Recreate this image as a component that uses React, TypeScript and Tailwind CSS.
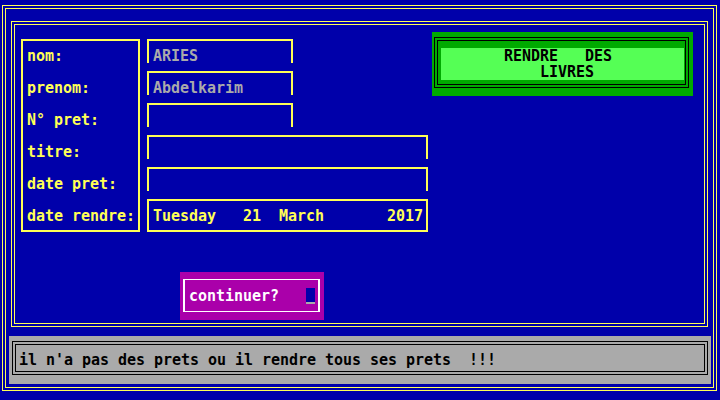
const font = { fontFamily: "'DejaVu Sans Mono', 'Liberation Mono', monospace" };

const labels = ["nom:", "prenom:", "N° pret:", "titre:", "date pret:", "date rendre:"];

const fields = [
  { text: "ARIES", long: false, color: "text-[#aaaaaa]" },
  { text: "Abdelkarim", long: false, color: "text-[#aaaaaa]" },
  { text: "", long: false, color: "text-[#aaaaaa]" },
  { text: "", long: true, color: "text-[#ffff55]" },
  { text: "", long: true, color: "text-[#ffff55]" },
];

export default function App() {
  return (
    <div
      className="w-[720px] h-[400px] bg-[#0000aa] pl-[2px] pt-[5px] overflow-hidden text-[15px] leading-[16px] font-bold tracking-[-0.03px] whitespace-pre"
      style={font}
    >
      {/* outer frame */}
      <div className="w-[715px] h-[386px] border-4 border-double border-[#ffff55]">
        {/* inner frame */}
        <div className="ml-[5px] mt-[12px] w-[697px] h-[306px] border-4 border-double border-[#ffff55]">
          <div className="flex items-start pt-[7px]">
            {/* labels */}
            <div className="ml-[6px] mt-[7px] w-[119px] h-[193px] border-2 border-[#ffff55] pl-[4px] pt-[7px] flex flex-col gap-4 text-[#ffff55]">
              {labels.map((l) => (
                <div key={l} className="h-4">
                  {l}
                </div>
              ))}
            </div>

            {/* fields */}
            <div className="ml-[7px] mt-[7px] w-[281px] flex flex-col gap-2">
              {fields.map((f, i) => (
                <div
                  key={i}
                  className={`h-[24px] border-t-2 border-x-2 border-[#ffff55] pl-[4px] pt-[7px] ${f.color} ${
                    f.long ? "w-[281px]" : "w-[146px]"
                  }`}
                >
                  {f.text}
                </div>
              ))}
              <div className="w-[281px] h-[33px] border-2 border-[#ffff55] pl-[4px] pt-[7px] text-[#ffff55]">
                {"Tuesday   21  March       2017"}
              </div>
            </div>

            {/* green title */}
            <div className="ml-[4px] w-[261px] h-[64px] bg-[#00aa00] pl-[2px] pt-[5px]">
              <div className="w-[255px] h-[51px] border-4 border-double border-black pl-[3px] pt-[7px]">
                <div className="w-[243px] h-[32px] bg-[#55ff55] text-black">
                  <div>{"       RENDRE   DES"}</div>
                  <div>{"           LIVRES"}</div>
                </div>
              </div>
            </div>
          </div>

          {/* continuer box */}
          <div className="ml-[165px] mt-[40px] w-[144px] h-[48px] bg-[#aa00aa] pl-[3px] pt-[7px]">
            <div className="w-[137px] h-[33px] border-x-2 border-y border-white pl-[4px] pt-[8px] flex items-start text-white">
              <span>continuer?</span>
              <div className="ml-[27px] w-[9px] h-[16px] bg-[#0000aa] border-b-2 border-[#aaaaaa]" />
            </div>
          </div>
        </div>

        {/* status bar */}
        <div className="ml-[3px] mt-[9px] w-[702px] h-[48px] bg-[#aaaaaa] pl-[3px] pt-[5px]">
          <div className="w-[696px] h-[34px] border-4 border-double border-black pl-[3px] pt-[7px] text-black">
            {"il n'a pas des prets ou il rendre tous ses prets  !!!"}
          </div>
        </div>
      </div>
    </div>
  );
}
